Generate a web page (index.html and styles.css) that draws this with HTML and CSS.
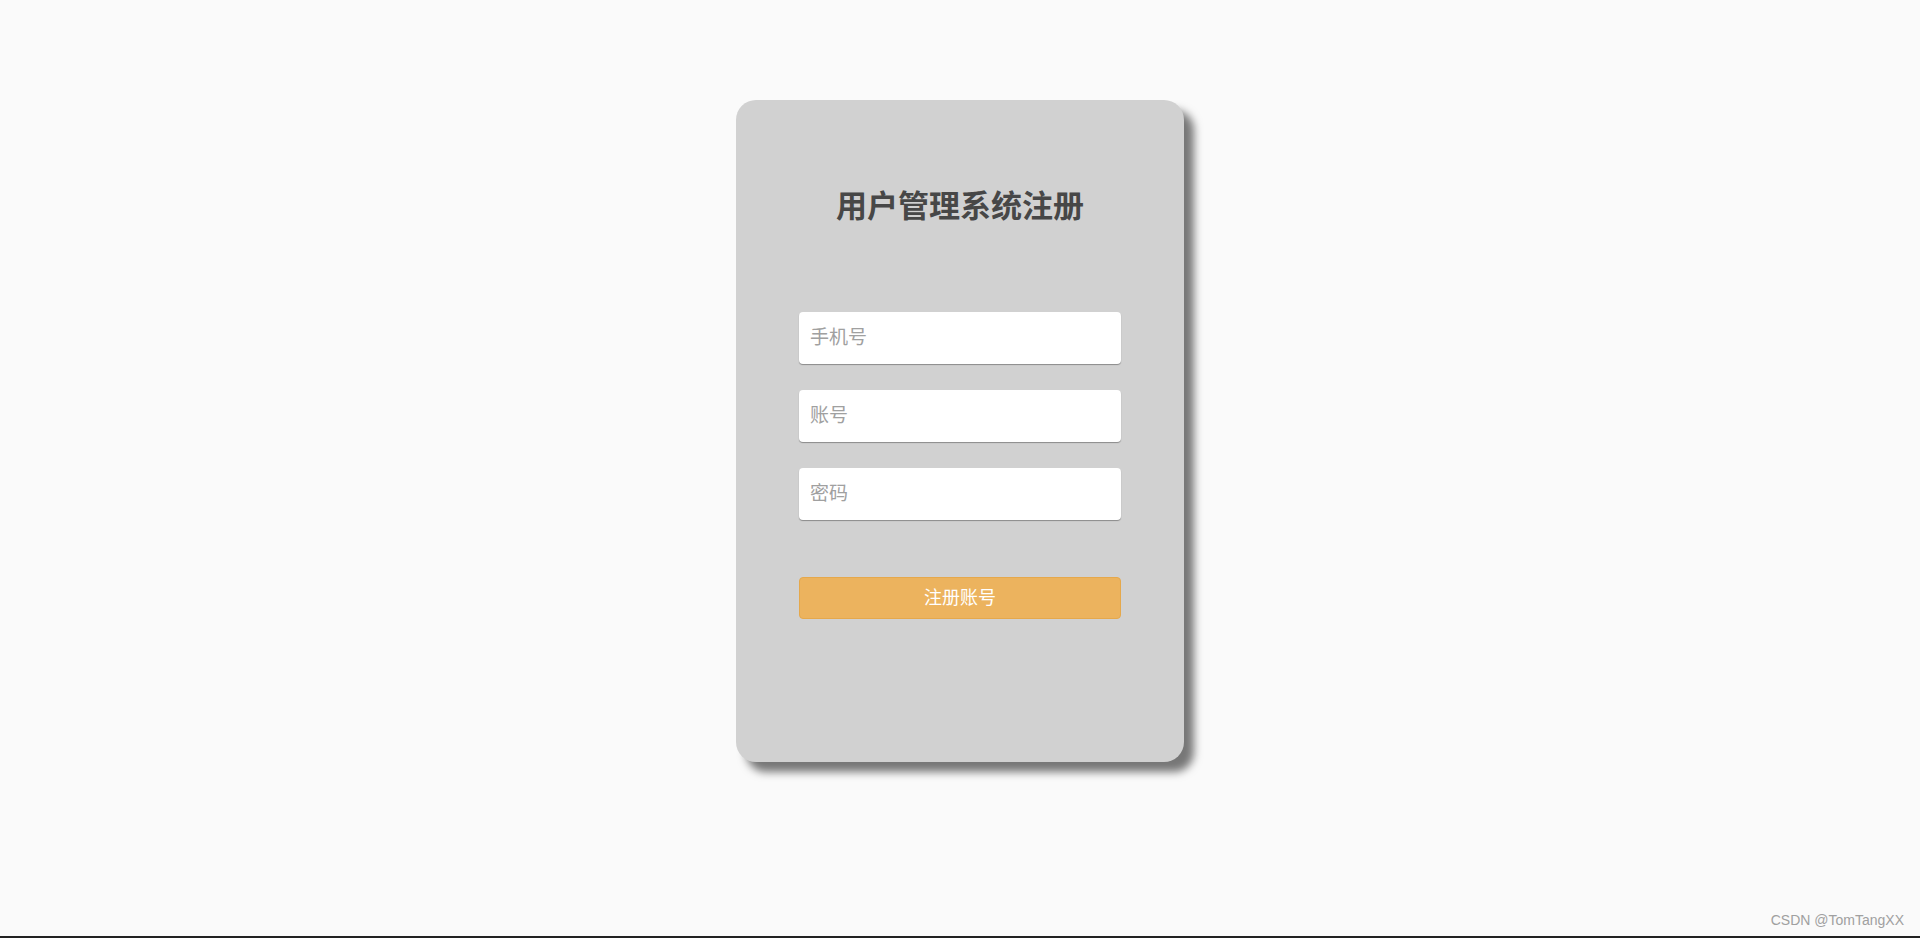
FILE: index.html
```html
<!DOCTYPE html>
<html lang="zh">
<head>
<meta charset="utf-8">
<title>用户管理系统注册</title>
<link rel="stylesheet" href="styles.css">
</head>
<body>
<main class="page">
  <div class="card">
    <h2 class="title">用户管理系统注册</h2>
    <form class="form">
      <input class="field" type="text" placeholder="手机号">
      <input class="field" type="text" placeholder="账号">
      <input class="field" type="password" placeholder="密码">
      <button class="submit" type="button">注册账号</button>
    </form>
  </div>
</main>
<footer class="footer">CSDN @TomTangXX</footer>
</body>
</html>
```
FILE: styles.css
```css
html, body {
  margin: 0;
  padding: 0;
}
body {
  height: 938px;
  box-sizing: border-box;
  background: #fafafa;
  border-bottom: 2px solid #222;
  display: flex;
  flex-direction: column;
  font-family: "Noto Sans CJK SC", "Noto Sans", sans-serif;
  overflow: hidden;
}
.page {
  flex: 1;
  display: flex;
  justify-content: center;
  align-items: flex-start;
  padding-top: 100px;
}
.card {
  width: 448px;
  height: 662px;
  box-sizing: border-box;
  background: #d1d1d1;
  border-radius: 20px;
  box-shadow: 10px 10px 8px #777;
  padding: 84px 63px 0;
}
.title {
  margin: 0;
  height: 40px;
  line-height: 40px;
  text-align: center;
  font-size: 31px;
  font-weight: 700;
  color: #474747;
}
.form {
  margin-top: 88px;
  display: flex;
  flex-direction: column;
}
.field {
  display: block;
  width: 100%;
  height: 52px;
  box-sizing: border-box;
  border: none;
  border-radius: 4px;
  background: #fff;
  box-shadow: 0 1px 1px #8a8a8a;
  padding: 0 11px 5px;
  margin: 0 0 26px;
  font-family: "Noto Sans CJK SC", sans-serif;
  font-size: 19px;
  color: #333;
  outline: none;
}
.field::placeholder {
  color: #a0a0a0;
}
.field:last-of-type {
  margin-bottom: 57px;
}
.submit {
  display: block;
  width: 100%;
  height: 42px;
  box-sizing: border-box;
  border: 1px solid #e5a84c;
  border-radius: 4px;
  background: #ecb35e;
  color: #fff;
  font-family: "Noto Sans CJK SC", sans-serif;
  font-size: 18px;
  padding: 0 0 4px;
  cursor: pointer;
}
.footer {
  text-align: right;
  padding: 0 16px 6px 0;
  font-family: "Liberation Sans", Arial, sans-serif;
  font-size: 14px;
  color: #a0a0a0;
  line-height: 20px;
}
```
